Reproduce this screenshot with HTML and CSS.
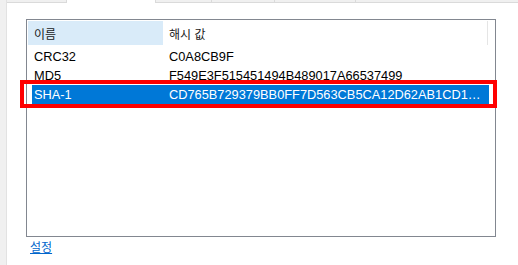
FILE: index.html
```html
<!DOCTYPE html>
<html lang="ko">
<head>
    <meta charset="UTF-8">
    <title>파일 해시</title>
    <link rel="stylesheet" href="styles.css">
</head>
<body>
    <div class="window">
        <div class="side-strip"></div>

        <div class="main">
            <div class="tabs">
                <div class="tab tab-first"></div>
                <div class="tab tab-active"></div>
                <div class="tab tab-w57"></div>
                <div class="tab tab-w63"></div>
                <div class="tab tab-w81"></div>
                <div class="tab tab-rest"></div>
            </div>

            <div class="panel">
                <div class="listview">
                    <div class="list-header">
                        <div class="col-name header-cell hover">이름</div>
                        <div class="col-hash header-cell">해시 값</div>
                    </div>

                    <div class="list-row">
                        <div class="col-name cell">CRC32</div>
                        <div class="col-hash cell">C0A8CB9F</div>
                    </div>
                    <div class="list-row">
                        <div class="col-name cell">MD5</div>
                        <div class="col-hash cell">F549E3F515451494B489017A66537499</div>
                    </div>
                    <div class="list-row selected">
                        <div class="col-name cell">SHA-1</div>
                        <div class="col-hash cell">CD765B729379BB0FF7D563CB5CA12D62AB1CD1DC</div>
                        <div class="highlight-box"></div>
                    </div>
                </div>

                <a href="#" class="settings-link">설정</a>
            </div>
        </div>
    </div>
</body>
</html>
```

FILE: styles.css
```css
* {
    margin: 0;
    padding: 0;
    box-sizing: border-box;
}

body {
    background: #ffffff;
    font-family: 'Liberation Sans', 'Noto Sans CJK KR', sans-serif;
    font-size: 12.8px;
    color: #000000;
    overflow: hidden;
}

.window {
    display: flex;
    width: 518px;
    height: 265px;
}

.side-strip {
    width: 7px;
    background: #f0f0f0;
    border-right: 1px solid #e2e2e2;
    flex-shrink: 0;
}

.main {
    flex: 1;
    display: flex;
    flex-direction: column;
}

/* tab strip along the top edge */
.tabs {
    display: flex;
    height: 3px;
}

.tab {
    background: #f0f0f0;
    border-bottom: 1px solid #dadada;
    border-right: 1px solid #dadada;
}

.tab-first { width: 60px; }
.tab-active { width: 88px; background: #ffffff; border: none; }
.tab-w57 { width: 57px; border-left: 1px solid #dadada; }
.tab-w63 { width: 63px; }
.tab-w81 { width: 81px; }
.tab-rest { flex: 1; border-right: none; }

.panel {
    padding: 16px 0 0 19px;
}

.listview {
    width: 470px;
    height: 218px;
    border: 1px solid #828790;
    padding: 1px;
}

.list-header {
    display: flex;
    height: 24px;
    margin-bottom: 2px;
    font-size: 12px;
}

.header-cell {
    display: flex;
    align-items: center;
    padding-left: 6px;
    color: #1a1a1a;
}

.list-header .col-name {
    width: 135px;
}

.list-header .col-hash {
    width: 325px;
    border-right: 1px solid #e5e5e5;
}

.header-cell.hover {
    background: #d9ebf9;
}

.list-row {
    position: relative;
    display: flex;
    height: 19px;
    margin: 0 5px 0 4px;
}

.cell {
    display: flex;
    align-items: center;
    white-space: nowrap;
}

.list-row .col-name {
    width: 131px;
    padding-left: 2px;
}

.list-row .col-hash {
    width: 326px;
    padding: 0 8px 0 6px;
    display: block;
    line-height: 19px;
    overflow: hidden;
    text-overflow: ellipsis;
}

.list-row.selected {
    background: #0078d7;
    color: #ffffff;
}

/* red annotation frame around the selected row */
.highlight-box {
    position: absolute;
    left: -12px;
    top: -5px;
    right: -8px;
    bottom: -4px;
    border: 4px solid #ff0000;
    pointer-events: none;
}

.settings-link {
    display: inline-block;
    margin: 4px 0 0 4px;
    color: #0066cc;
    font-size: 12px;
    line-height: 14px;
    text-decoration: underline;
}
```
